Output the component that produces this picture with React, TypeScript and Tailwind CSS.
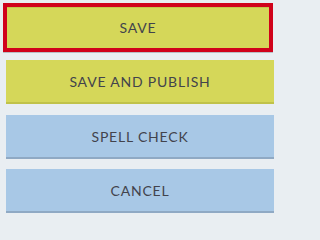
import React from 'react';

const base =
  "flex w-full items-center justify-center text-[14px] uppercase tracking-[0.8px] text-[#42434c]";

export default function App() {
  return (
    <div className="min-h-screen w-full bg-[#e9eef2]">
      <div
        className="h-[224px] w-[280px] px-[6px] pt-[3px]"
        style={{ fontFamily: 'Lato, "Open Sans", sans-serif' }}
      >
        {/* focused save button */}
        <button
          className={`${base} -mx-[3px] h-[49px] border-4 border-[#d0021b] bg-[#d5d759] shadow-[0_1px_0_#b9bec4,inset_0_1px_0_#c4c64e]`}
          style={{ width: 270 }}
        >
          Save
        </button>
        <button className={`${base} mt-[8px] h-[44px] border-b-2 border-[#c0c24a] bg-[#d5d759]`}>
          Save and Publish
        </button>
        <button className={`${base} mt-[11px] h-[44px] border-b-2 border-[#8fa9c4] bg-[#a8c8e6]`}>
          Spell Check
        </button>
        <button className={`${base} mt-[10px] h-[44px] border-b-2 border-[#8fa9c4] bg-[#a8c8e6]`}>
          Cancel
        </button>
      </div>
    </div>
  );
}
